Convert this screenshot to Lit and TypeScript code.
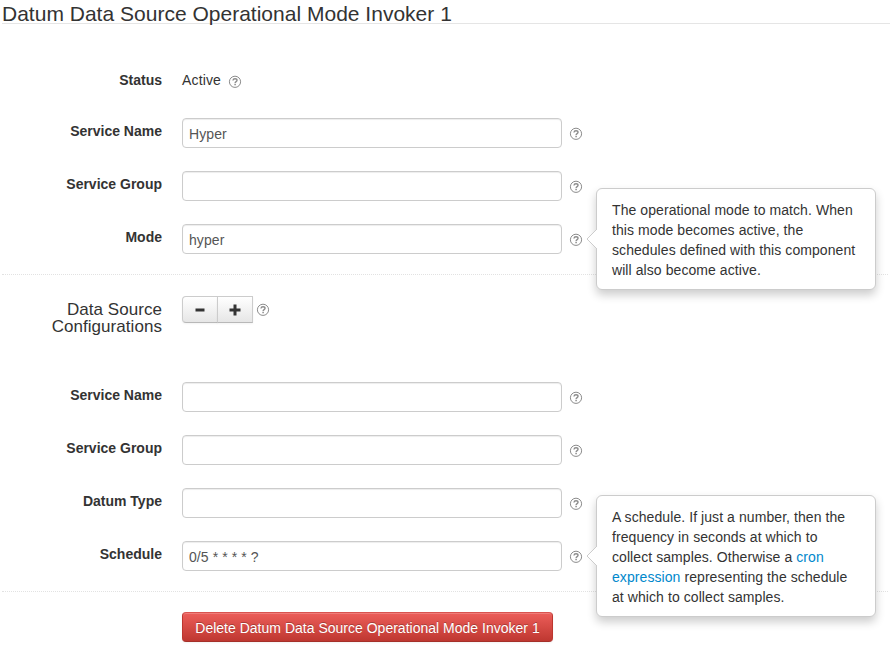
import { LitElement, html, css, svg } from "lit";
import { customElement, property } from "lit/decorators.js";

@customElement("help-icon")
class HelpIcon extends LitElement {
  static styles = css`
    :host { display: block; width: 14px; height: 14px; flex: none; }
    .icon { display: block; }
  `;
  render() {
    return html`<svg class="icon" width="14" height="14" viewBox="0 0 14 14" fill="none" stroke="#8c8c8c">
      ${svg`<circle cx="7" cy="6.8" r="5.6" stroke-width="1"/>
      <path d="M4.95 5.5C5.05 4.3 5.9 3.7 7.05 3.7C8.25 3.7 9.05 4.3 9.05 5.25C9.05 6.6 7.1 6.6 7.1 8.1" stroke-width="1.35"/>
      <path d="M7.1 8.8V10.2" stroke-width="1.5"/>`}
    </svg>`;
  }
}

@customElement("form-row")
class FormRow extends LitElement {
  @property() label = "";
  @property() value = "";

  static styles = css`
    :host { display: flex; height: 30px; margin-bottom: 23px; position: relative; }
    .label { width: 162px; margin-right: 20px; padding-top: 3px; line-height: 20px; font-weight: bold; text-align: right; }
    .field {
      box-sizing: border-box; width: 380px; height: 30px; margin: 0 7px 0 0; padding: 2px 6px 0;
      border: 1px solid #ccc; border-radius: 4px; background: #fff; color: #555;
      font: 14px/20px "Liberation Sans", Arial, sans-serif; letter-spacing: 0.08px;
      box-shadow: inset 0 1px 1px rgba(0, 0, 0, 0.075); outline: none;
    }
    .help { margin-top: 9px; }
  `;
  render() {
    return html`<label class="label">${this.label}</label>
      <input class="field" type="text" .value=${this.value} />
      <help-icon class="help"></help-icon>
      <slot></slot>`;
  }
}

@customElement("help-popover")
class HelpPopover extends LitElement {
  static styles = css`
    :host {
      position: absolute; left: 596px; top: 50%; transform: translateY(-50%); z-index: 2;
      box-sizing: border-box; width: 280px; padding: 11px 15px 9px; white-space: nowrap;
      line-height: 20px; letter-spacing: 0.075px; background: #fff; border: 1px solid #ccc; border-radius: 6px;
      box-shadow: 0 5px 10px rgba(0, 0, 0, 0.2);
    }
    .arrow { position: absolute; left: -11px; top: 50%; margin-top: -11px; }
  `;
  render() {
    return html`<svg class="arrow" width="12" height="22" viewBox="0 0 12 22">
        <path d="M11 1L1 11L11 21H12V1Z" fill="#fff"/>
        <path d="M11 1L1 11L11 21" fill="none" stroke="#ccc"/>
      </svg><slot></slot>`;
  }
}

@customElement("app-root")
class AppRoot extends LitElement {
  static styles = css`
    :host {
      display: block; height: 655px; overflow: hidden; background: #fff; color: #333;
      font: 14px/20px "Liberation Sans", Arial, sans-serif;
    }
    .title {
      box-sizing: border-box; height: 24px; margin: 0 0 0 2px; padding-top: 2px; border-bottom: 1px solid #e5e5e5;
      font-size: 21px; font-weight: normal; line-height: 23px; letter-spacing: 0.01px; white-space: nowrap;
    }
    .status { display: flex; height: 20px; margin: 46px 0 28px; }
    .status-label { width: 162px; margin-right: 20px; font-weight: bold; text-align: right; }
    .status-value { letter-spacing: 0.15px; }
    .status-help { margin: 5px 0 0 7px; }
    .rule { height: 0; margin: -3px 2px 0; border-top: 1px dotted #e2e2e2; }
    .config { display: flex; height: 86px; padding-top: 21px; }
    .legend { width: 162px; margin-right: 20px; padding-top: 5px; font-size: 17px; line-height: 17px; letter-spacing: 0.05px; text-align: right; }
    .buttons { display: flex; height: 27px; }
    .btn {
      box-sizing: border-box; width: 36px; height: 27px; padding: 0; display: flex; align-items: center; justify-content: center;
      border: 1px solid #ccc; border-bottom-color: #b8b8b8; border-radius: 4px 0 0 4px;
      background: linear-gradient(#fff, #e6e6e6); box-shadow: inset 0 1px 0 rgba(255, 255, 255, 0.2), 0 1px 2px rgba(0, 0, 0, 0.05);
    }
    .btn + .btn { margin-left: -1px; border-radius: 0; }
    .config-help { margin: 7px 0 0 3px; }
    .delete {
      display: block; box-sizing: border-box; width: 371px; height: 30px; margin: 20px 0 0 182px; padding: 1px 0 0;
      border: 1px solid; border-color: #d9534f #bd362f #a5302a; border-radius: 4px; color: #fff;
      background: linear-gradient(#ee5f5b, #bd362f) border-box; font: 14px/20px "Liberation Sans", Arial, sans-serif;
      letter-spacing: 0.01px; text-shadow: 0 -1px 0 rgba(0, 0, 0, 0.25); white-space: nowrap;
      box-shadow: inset 0 1px 0 rgba(255, 255, 255, 0.2), 0 1px 2px rgba(0, 0, 0, 0.05);
    }
    .link { color: #0088cc; text-decoration: none; }
  `;
  render() {
    return html`
      <h1 class="title">Datum Data Source Operational Mode Invoker 1</h1>
      <div class="status">
        <span class="status-label">Status</span><span class="status-value">Active</span>
        <help-icon class="status-help"></help-icon>
      </div>
      <form-row label="Service Name" value="Hyper"></form-row>
      <form-row label="Service Group"></form-row>
      <form-row label="Mode" value="hyper">
        <help-popover>
          The operational mode to match. When<br />this mode becomes active, the<br />schedules defined with this component<br />will also become active.
        </help-popover>
      </form-row>
      <div class="rule"></div>
      <div class="config">
        <div class="legend">Data Source<br />Configurations</div>
        <div class="buttons">
          <button class="btn" aria-label="Remove"><svg width="12" height="12"><path d="M1.5 6H10.5" stroke="#333" stroke-width="3"/></svg></button>
          <button class="btn" aria-label="Add"><svg width="12" height="12"><path d="M.5 6H11.5M6 .5V11.5" stroke="#333" stroke-width="3"/></svg></button>
        </div>
        <help-icon class="config-help"></help-icon>
      </div>
      <form-row label="Service Name"></form-row>
      <form-row label="Service Group"></form-row>
      <form-row label="Datum Type"></form-row>
      <form-row label="Schedule" value="0/5 * * * * ?">
        <help-popover>
          A schedule. If just a number, then the<br />frequency in seconds at which to<br />collect samples. Otherwise a <a class="link">cron</a><br /><a class="link">expression</a> representing the schedule<br />at which to collect samples.
        </help-popover>
      </form-row>
      <div class="rule"></div>
      <button class="delete">Delete Datum Data Source Operational Mode Invoker 1</button>
    `;
  }
}
